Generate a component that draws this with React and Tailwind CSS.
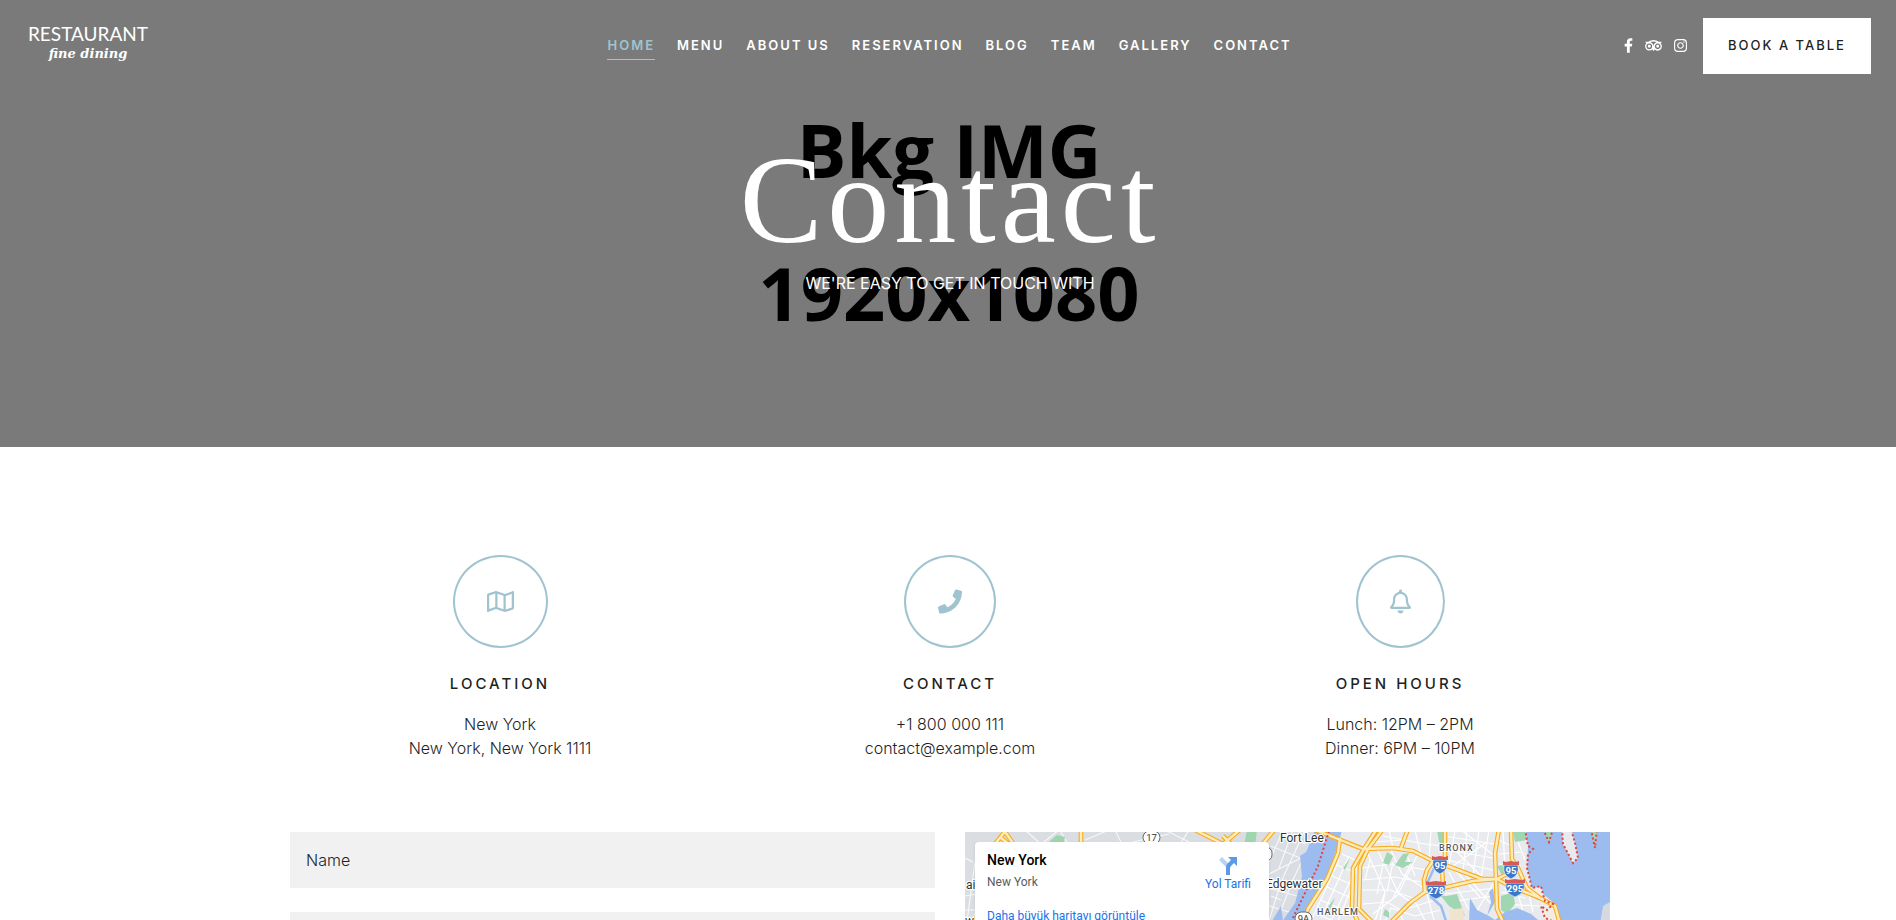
import React from "react";
import {
  FaFacebookF,
  FaTripadvisor,
  FaInstagram,
  FaRegMap,
  FaPhone,
  FaRegBell,
} from "react-icons/fa";

const NAV = ["Home", "Menu", "About us", "Reservation", "Blog", "Team", "Gallery", "Contact"];

const SOCIAL = [
  { label: "Facebook", Icon: FaFacebookF, size: "h-[15px] w-[9px]" },
  { label: "Tripadvisor", Icon: FaTripadvisor, size: "h-[15px] w-[17px]" },
  { label: "Instagram", Icon: FaInstagram, size: "h-[15px] w-[13px]" },
];

const INFO = [
  {
    title: "Location",
    Icon: FaRegMap,
    size: "h-[25px] w-[27px]",
    lines: ["New York", "New York, New York 1111"],
  },
  {
    title: "Contact",
    Icon: FaPhone,
    size: "h-[25px] w-[24px]",
    lines: ["+1 800 000 111", "contact@example.com"],
  },
  {
    title: "Open hours",
    Icon: FaRegBell,
    size: "h-[25px] w-[21px]",
    lines: ["Lunch: 12PM – 2PM", "Dinner: 6PM – 10PM"],
  },
];

const HIGHWAYS = [
  "M375 6L373 21L362 47L343 77L338 92",
  "M348 -3L373 7L398 17L428 16L448 19L468 29L485 35L517 47L532 47",
  "M412 -3L399 17L388 36L387 77L394 92",
  "M418 -3L403 17L395 34L394 77L412 95",
  "M436 16L443 -3",
  "M424 92L445 71L460 60L478 56L508 49L532 47",
  "M468 29L462 38L459 48L460 60",
  "M480 -3L480 24L477 34L478 56",
  "M534 -3L530 21L531 47L532 77L539 92",
  "M546 -3L547 27L553 36L562 56L575 66L590 74L595 92",
  "M532 47L546 40L552 32",
  "M532 47L545 54L575 66",
  "M296 14L310 -3",
  "M30 12L42 -3M35 5L46 14M38 -3L50 14",
  "M230 -2L258 12L276 -3M258 4L268 14",
  "M116 -3L116 12",
];

const STREETS = [
  "M366 89L398 22M359 80L384 24M373 89L388 52M351 82L392 98M356 68L386 82M362 55L388 67M367 44L388 53M372 33L391 41M377 22L394 30M346 89L374 28",
  "M402 20L420 60L415 89M412 17L434 62L446 70M425 16L437 42L462 58M440 18L450 44M397 36L425 32L462 38M397 48L430 45L456 50M397 58L425 58L448 66M398 72L422 70L436 78M410 89L420 60M405 28L400 48M434 62L408 82M418 32L412 62M428 30L422 60M444 36L428 66M452 24L434 60",
  "M418 4L460 12L478 14M424 -2L428 16M450 -2L456 24M466 -2L464 28M406 10L440 8M478 4L530 12M490 -2L484 34M502 -2L498 40M514 -2L508 44M524 -2L516 46M482 18L528 26M482 28L528 38M496 -2L530 24M482 10L518 46M522 10L488 34",
  "M484 40L504 78M490 38L516 66M500 42L526 72M480 62L530 56M484 70L528 64M510 82L528 52M534 8L546 14M534 22L556 20M534 32L556 34M538 -2L540 38M550 2L560 28M536 60L560 66M536 72L574 74M540 56L546 82M552 58L558 80M564 62L568 80",
  "M420 89L426 76L450 84L476 78M434 80L440 92M450 70L462 92M462 62L470 92M444 76L470 68",
];

const JERSEY_STREETS = [
  "M0 26L8 30M0 64L12 62M10 30L2 89M60 -2L78 14M74 14L94 -2M0 78L10 78M96 0L104 14M120 8L144 -2M150 -2L158 14M200 -2L232 14M214 14L224 -2M168 10L204 2",
  "M304 89L316 50L340 -2M312 89L326 52L348 6M304 42L336 26M304 56L332 64M304 74L324 80M318 -2L304 30M328 -2L314 36M306 14L340 28M306 64L316 68M322 2L340 12",
];

const COAST =
  "M560 -3L563 14L568 17L563 22L562 36L567 56L576 54L578 62L580 69L588 72L582 78L576 74L580 86L595 92";

function Shield({ x, y, text }) {
  const w = text.length > 2 ? 10 : 8;
  return (
    <g transform={`translate(${x} ${y})`}>
      <path d={`M${-w + 1} -4H${w - 1}Q${w + 1} 6 0 10Q${-w - 1} 6 ${-w + 1} -4Z`} fill="#3b78c9" stroke="#fff" strokeWidth="0.6" />
      <path d={`M${-w} -8L${-w + 3} -7L0 -8L${w - 3} -7L${w} -8V-4H${-w}Z`} fill="#d65a5a" />
      <text y="5" textAnchor="middle" fontSize="9.5" fontWeight="700" fill="#fff">{text}</text>
    </g>
  );
}

function MapDrawing() {
  return (
    <svg
      className="block h-full w-full font-[Roboto,sans-serif]"
      viewBox="0 0 645 400"
      preserveAspectRatio="xMinYMin slice"
      role="img"
      aria-label="New York"
    >
      <rect width="645" height="400" fill="#e8eaed" />
      <path d="M0 0H350L338 26L337 44L330 71L318 89V400H0Z" fill="#dadde1" />
      <g fill="none" stroke="#f6f7f9" strokeWidth="1.2">
        {JERSEY_STREETS.map((d) => <path key={d} d={d} />)}
      </g>
      <path d="M84 10L92 3L100 5L98 14ZM282 -2L292 -2L290 14H279Z" fill="#9fd5ae" />
      <path d="M303 96L316 74L318 89L300 110ZM350 -2L341 20L335 24L337 44L330 71L310 100L332 95L343 77L363 41L373 14L377 -2Z" fill="#9cbcf0" />
      <g fill="none" stroke="#fff" strokeWidth="1.2">
        {STREETS.map((d) => <path key={d} d={d} />)}
      </g>
      <g fill="#a0d6b1">
        <path d="M422 20L428 24L424 33L418 31ZM438 22L444 21L440 30L448 30L438 36L430 33ZM472 -2L478 -2L478 14L474 10Z" />
        <path d="M420 77L424 80V86L418 83ZM370 66L364 80L362 76ZM385 26L380 38L378 36ZM482 64L492 62L500 84L484 74L476 64Z" />
        <path d="M532 34L540 33L546 40L536 42ZM536 64L548 60L550 72L542 82L536 78ZM548 -2L560 -2L562 8L550 10Z" />
      </g>
      <path d="M484 78L498 76L500 92H486Z" fill="#f1e4cf" />
      <path d="M410 -2L400 14M465 64L476 74L482 92M470 34L460 56" fill="none" stroke="#9cbcf0" strokeWidth="2.5" />
      <path d="M504 92L505 66L512 78L524 84L530 88L540 80L552 76L566 82L578 92ZM522 84L530 70L528 56L524 60L526 70Z" fill="#9cbcf0" />
      <path d="M560 -3L563 14L562 36L567 56L577 58L580 69L588 72L595 92L600 400H645V-3Z" fill="#9cbcf0" />
      <path d="M597 -3L598 12L608 31L613 26L610 11L606 -3Z" fill="#e8eaed" />
      <path d="M578 -3L584 10L588 -3ZM626 -3L630 16L632 -3Z" fill="#a0d6b1" />
      <path d="M635 92L638 74L645 70V92Z" fill="#d5dade" />
      <path d="M567 56L576 55L578 62L590 72L592 92L580 86L575 70Z" fill="#f1ece4" />
      <g fill="none" strokeLinejoin="round">
        {HIGHWAYS.map((d) => <path key={d} d={d} stroke="#f9ab1e" strokeWidth="4.6" />)}
        {HIGHWAYS.map((d) => <path key={d} d={d} stroke="#fdecb8" strokeWidth="2.4" />)}
      </g>
      <g fill="none" stroke="#e0433b" strokeWidth="2" strokeDasharray="2 2.4">
        <path d="M364 -1L353 34L325 92" />
        <path d={COAST} />
        <path d="M597 -3L598 12L608 31L613 26L610 11L606 -3M578 -3L584 10L588 -3M626 -3L630 16L632 -3" />
      </g>
      <g fill="#fff" stroke="#666" strokeWidth="1">
        <rect x="178" y="-1" width="17" height="13" rx="6.5" />
        <rect x="294" y="15" width="13" height="14" rx="6" />
        <rect x="330" y="80" width="17" height="13" rx="6.5" />
      </g>
      <g fontSize="9.5" fill="#333" textAnchor="middle">
        <text x="186.5" y="9">17</text>
        <text x="338.5" y="90">9A</text>
      </g>
      <g fontSize="12" fill="#2f3136" stroke="#fff" strokeWidth="2.4" strokeLinejoin="round" paintOrder="stroke">
        <text x="315" y="10">Fort Lee</text>
        <text x="301" y="56">Edgewater</text>
        <text x="1" y="57">ai</text>
        <text x="0" y="93">wl</text>
      </g>
      <g fontSize="9" fontWeight="500" letterSpacing="1" fill="#54585d" stroke="#fff" strokeWidth="2" strokeLinejoin="round" paintOrder="stroke">
        <text x="352" y="83">HARLEM</text>
        <text x="474" y="19">BRONX</text>
      </g>
      <Shield x={475} y={32} text="95" />
      <Shield x={471} y={57} text="278" />
      <Shield x={546} y={37} text="95" />
      <Shield x={550} y={55} text="295" />
    </svg>
  );
}

function Header() {
  return (
    <header className="relative z-10 flex h-[92px] items-center justify-between px-[25px]">
      <a href="#" className="flex w-[126px] flex-col items-center gap-0.5 pb-1.5 leading-none text-white">
        <span className="font-[Lato,sans-serif] text-[19px] leading-5">RESTAURANT</span>
        <span className="font-['DejaVu_Serif',serif] text-[13px] font-bold leading-4 italic">fine dining</span>
      </a>
      <nav className="ml-[124px] flex gap-[22px] text-[13px] font-semibold tracking-[2px]">
        {NAV.map((item, i) => (
          <a
            key={item}
            href="#"
            className={
              i === 0
                ? "border-b border-[#a0c4cf] pt-1 pb-1 uppercase text-[#a0c4cf]"
                : "border-b border-transparent pt-1 pb-1 uppercase text-white"
            }
          >
            {item}
          </a>
        ))}
      </nav>
      <div className="flex items-center">
        <div className="mr-4 mb-0.5 flex gap-3 text-white">
          {SOCIAL.map(({ label, Icon, size }) => (
            <a key={label} href="#" aria-label={label}>
              <Icon className={size} />
            </a>
          ))}
        </div>
        <button className="h-14 w-[168px] bg-white text-[13px] font-medium tracking-[2px] text-[#1f1f1f] uppercase">
          Book a table
        </button>
      </div>
    </header>
  );
}

export default function App() {
  return (
    <div className="h-screen overflow-hidden bg-white font-[Inter,sans-serif] text-[#1f1f1f]">
      <section className="relative h-[447px] bg-[#7a7a7a]">
        <div
          aria-hidden="true"
          className="absolute inset-0 pt-[78px] pl-0.5 text-center font-['Open_Sans',sans-serif] text-[74px] leading-[143px] font-bold text-black"
        >
          <div>Bkg IMG</div>
          <div>1920x1080</div>
        </div>
        <Header />
        <div className="relative flex flex-col items-center pt-10 pl-1 text-white">
          <h1 className="font-['Liberation_Serif',serif] text-[124px] leading-[137px] tracking-[5px]">Contact</h1>
          <p className="text-base leading-7">WE'RE EASY TO GET IN TOUCH WITH</p>
        </div>
      </section>

      <main className="pl-1">
        <div className="mx-auto max-w-[1350px] pt-[108px]">
          <section className="grid grid-cols-3">
            {INFO.map(({ title, Icon, size, lines }) => (
              <div key={title} className="flex flex-col items-center text-center">
                <div className="rounded-[50%] border-2 border-[#a0c4cf] p-8 text-[#a0c4cf]">
                  <Icon className={size} />
                </div>
                <h2 className="mt-6 text-[15px] leading-6 font-medium tracking-[3px] uppercase">{title}</h2>
                <p className="mt-4 text-base leading-6 font-light">
                  {lines[0]}
                  <br />
                  {lines[1]}
                </p>
              </div>
            ))}
          </section>

          <section className="mt-[72px] grid grid-cols-2 gap-[30px] px-[15px]">
            <form className="flex flex-col gap-6">
              <input
                type="text"
                aria-label="Name"
                placeholder="Name"
                className="h-14 w-full bg-[#f1f1f1] px-4 text-base font-light outline-none placeholder:text-[#1f1f1f]"
              />
              <input type="email" aria-label="Email" className="h-14 w-full bg-[#f1f1f1] px-4 outline-none" />
            </form>
            <div className="relative h-[400px] overflow-hidden">
              <MapDrawing />
              <div className="absolute top-2.5 left-2.5 flex w-[294px] justify-between rounded-sm bg-white px-3 pt-2.5 pb-3 font-[Roboto,sans-serif] text-xs shadow">
                <div>
                  <h3 className="text-sm leading-4 font-medium text-black">New York</h3>
                  <p className="mt-1.5 leading-4 text-[#5b5b5b]">New York</p>
                  <a href="#" className="mt-[18px] block leading-4 text-[#1a73e8]">
                    Daha büyük haritayı görüntüle
                  </a>
                </div>
                <a href="#" className="mr-1.5 flex flex-col items-center pt-1 text-[#1a73e8]">
                  <svg width="20" height="20" viewBox="0 0 20 20" aria-hidden="true">
                    <path d="M1 4L4 1L11 8L8 11Z" fill="#b9d3f6" />
                    <path d="M8 19V11Q8 9 10 7L13 4L10 1H19V10L16 7L13 10Q12 11 12 13V19Z" fill="#5c9ae6" />
                  </svg>
                  <span className="leading-4">Yol Tarifi</span>
                </a>
              </div>
            </div>
          </section>
        </div>
      </main>
    </div>
  );
}
